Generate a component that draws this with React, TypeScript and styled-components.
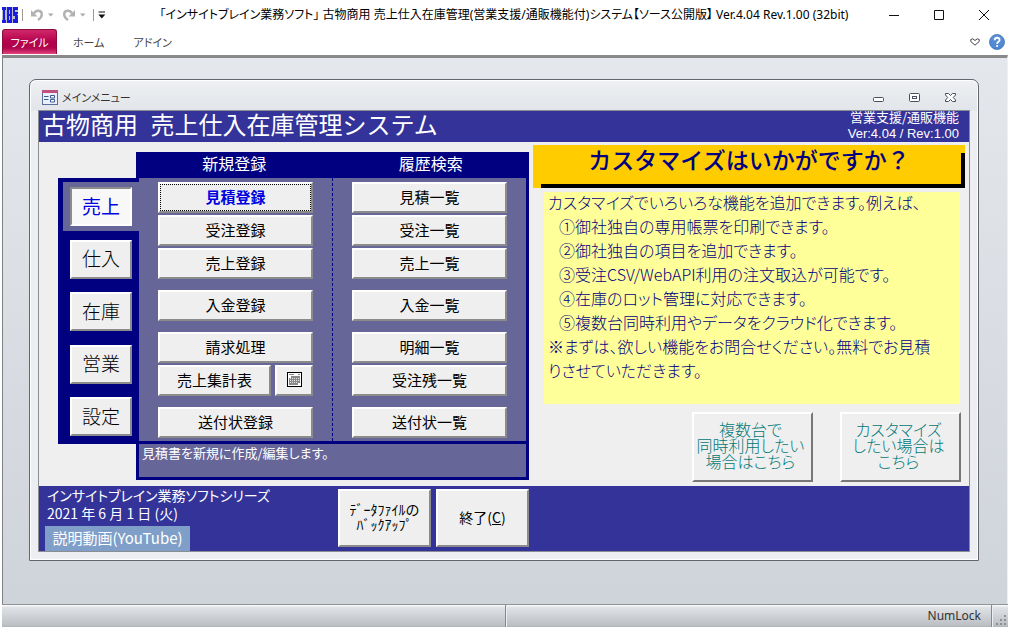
import React from "react";
import styled, { createGlobalStyle, css } from "styled-components";

const color = {
  navy: "#000080",
  indigo: "#333399",
  slate: "#666699",
  face: "#efefef",
  teal: "#007878",
};

const GlobalStyle = createGlobalStyle`
  *, *::before, *::after { box-sizing: border-box; }
  body {
    margin: 0;
    background: #fff;
    color: #000;
    font-family: "Noto Sans CJK JP", sans-serif;
    font-weight: 300;
  }
  button {
    margin: 0;
    padding: 0;
    border: 0;
    background: none;
    color: inherit;
    font: inherit;
    font-feature-settings: inherit;
  }
  h1, h2, p { margin: 0; font-weight: inherit; }
  svg { display: block; }
`;

const Shell = styled.div`
  display: flex;
  flex-direction: column;
  min-height: 100vh;
  padding: 0 1px 1px 2px;
`;

/* ---------- application frame ---------- */

const TitleBar = styled.header`
  display: grid;
  grid-template-columns: 1fr auto 1fr;
  align-items: center;
  height: 29px;
  padding-right: 2px;
`;

const QuickAccess = styled.div`
  display: flex;
  gap: 2px;
  align-items: center;
  height: 29px;
`;

const QuickButton = styled.button<{ $inset?: boolean }>`
  display: flex;
  align-items: center;
  height: 20px;
  padding-left: ${(p) => (p.$inset ? "3px" : "0")};
`;

const AppTitle = styled.h1`
  font-family: "Noto Sans", "Noto Sans CJK JP", sans-serif;
  font-size: 12px;
  font-weight: 400;
  line-height: 16px;
  font-feature-settings: "palt";
  white-space: nowrap;
`;

const Controls = styled.div`
  display: flex;
  justify-content: flex-end;
`;

const ControlButton = styled.button`
  display: flex;
  align-items: center;
  justify-content: center;
  width: 45px;
  height: 29px;
`;

const Ribbon = styled.nav`
  display: flex;
  align-items: stretch;
  height: 25px;
  padding-right: 3px;
`;

const RibbonTab = styled.button<{ $primary?: boolean }>`
  padding: 0 13px 0 16px;
  color: #444;
  font-size: 11px;
  font-weight: 400;
  line-height: 24px;
  font-feature-settings: "palt";
  white-space: nowrap;
  ${(p) =>
    p.$primary &&
    css`
      width: 55px;
      padding: 0;
      border: 1px solid #8d0c3e;
      border-bottom: 0;
      border-radius: 3px 3px 0 0;
      background: linear-gradient(#d0286a, #b3004c 50%, #b0044c 75%, #e2447c);
      color: #fff;
    `}
`;

const RibbonTools = styled.div`
  display: flex;
  align-items: center;
  gap: 9px;
  margin-left: auto;
`;

const ControlIcon = styled.button`
  display: flex;
  align-items: center;
`;

const Workspace = styled.main`
  flex: 1;
  margin-top: 1px;
  padding: 21px 28px 43px 26px;
  border-top: 3px solid #8a8a8a;
  border-left: 1px solid #7d8084;
  border-right: 1px solid #eef0f2;
  background: linear-gradient(#e4e8ec, #cfd3da);
`;

const StatusBar = styled.footer`
  display: flex;
  align-items: stretch;
  height: 23px;
  border-top: 1px solid #8f949a;
  background: linear-gradient(#fafbfb, #dfe2e5 12%, #bcc0c5 92%, #b0b4b9);
  color: #333;
  font-family: "Noto Sans", sans-serif;
  font-size: 12px;
  font-weight: 400;
  line-height: 20px;
`;

const StatusCell = styled.div`
  flex: 1 1 0;
  padding-top: 1px;
  border-right: 1px solid #85898e;
  box-shadow: 1px 0 0 #eceef0;
  text-align: right;
`;

const StatusText = styled.span`
  margin-right: 10px;
`;

const StatusGroup = styled.div`
  display: flex;
  flex: 1 1 0;
`;

const Grip = styled.div`
  display: flex;
  align-items: flex-end;
  justify-content: flex-end;
  width: 16px;
  padding: 0 1px 1px 0;
`;

/* ---------- form window ---------- */

const FormWindow = styled.section`
  padding: 0 8px 8px;
  border: 1px solid #63676d;
  border-radius: 7px 7px 0 0;
  background: linear-gradient(#eef0f3, #e2e5e9 30px, #eceef1 31px);
  box-shadow: inset 0 0 0 1px #fff;
`;

const FormTitle = styled.div`
  display: flex;
  align-items: center;
  height: 30px;
  padding: 4px 1px 0 4px;
  color: #333;
  font-size: 11px;
  font-weight: 400;
  line-height: 16px;
  font-feature-settings: "palt";
`;

const FormIcon = styled.span`
  margin-right: 4px;
`;

const FormControls = styled.div`
  display: flex;
  margin-left: auto;
`;

const FormControl = styled.button`
  display: flex;
  align-items: center;
  justify-content: center;
  width: 36px;
  height: 20px;
`;

const FormFrame = styled.div`
  border: 1px solid #8a8d92;
  background: ${color.face};
`;

const FormHeader = styled.div`
  display: flex;
  justify-content: space-between;
  height: 31px;
  padding: 0 10px 0 3px;
  background: ${color.indigo};
  color: #fff;
`;

const SystemName = styled.h2`
  font-size: 24px;
  font-weight: 400;
  line-height: 26px;
  white-space: nowrap;
`;

const SystemNamePart = styled.span`
  margin-left: 7px;
`;

const Edition = styled.div`
  margin-top: -2px;
  font-size: 13px;
  font-weight: 400;
  line-height: 16px;
  text-align: right;
  white-space: nowrap;
`;

const EditionVersion = styled.div`
  padding-top: 1px;
  font-family: "Liberation Sans", sans-serif;
`;

const FormBody = styled.div`
  display: flex;
  gap: 4px;
  padding: 3px 4px 4px 19px;
`;

/* ---------- menu ---------- */

const raised = css`
  padding-bottom: 2px;
  border: 2px solid;
  border-color: #fff #8b8b8b #8b8b8b #fff;
  background: ${color.face};
`;

const Menu = styled.div`
  display: grid;
  flex: none;
  grid-template-columns: 78px 393px;
  grid-template-rows: 26px 266px 36px;
  padding-top: 7px;
`;

const MenuHead = styled.div`
  display: grid;
  grid-column: 2;
  grid-template-columns: 1fr 1fr;
  background: ${color.navy};
  color: #fff;
  font-size: 16px;
  font-weight: 400;
  line-height: 22px;
  text-align: center;
`;

const SideTabs = styled.div`
  display: flex;
  flex-direction: column;
  grid-column: 1;
  justify-content: space-between;
  padding: 4px 0 3px 5px;
  background: ${color.navy};
`;

const SideSlot = styled.div<{ $active?: boolean }>`
  padding: 5px 4px 5px 7px;
  ${(p) =>
    p.$active &&
    css`
      position: relative;
      z-index: 1;
      margin-right: -3px;
      background: ${color.slate};
    `}
`;

const SideButton = styled.button<{ $active?: boolean }>`
  display: block;
  width: 62px;
  height: 39px;
  font-size: 19px;
  line-height: 32px;
  ${raised}
  ${(p) =>
    p.$active &&
    css`
      border-color: #8b8b8b #fff #fff #8b8b8b;
      background: #f8f8f8;
      color: #0000e0;
      font-weight: 400;
    `}
`;

const MenuPanel = styled.div`
  display: grid;
  grid-column: 2;
  grid-template-columns: 193px 1fr;
  border: 3px solid ${color.navy};
  border-top: 0;
  background: ${color.slate};
`;

const ActionColumn = styled.div`
  display: flex;
  flex-direction: column;
  gap: 11px;
  padding: 4px 19px 0;

  & + & {
    border-left: 1px dashed ${color.navy};
  }
`;

const ActionGroup = styled.div`
  display: flex;
  flex-direction: column;
  gap: 2px;
`;

const ActionRow = styled.div`
  display: flex;
  gap: 4px;
`;

const ActionButton = styled.button<{ $current?: boolean; $narrow?: boolean }>`
  display: flex;
  flex: ${(p) => (p.$narrow ? "0 0 38px" : "1 1 auto")};
  align-items: center;
  justify-content: center;
  height: 31px;
  font-size: 15px;
  font-weight: 400;
  line-height: 22px;
  ${raised}
  ${(p) =>
    p.$current &&
    css`
      outline: 1px dotted #000;
      outline-offset: -3px;
      color: #0000e0;
      font-weight: 700;
    `}
`;

const Description = styled.p`
  grid-column: 2;
  padding: 0 3px;
  border: 3px solid ${color.navy};
  border-top: 0;
  background: ${color.slate};
  color: #fff;
  font-size: 13px;
  font-weight: 400;
  line-height: 18px;
  font-feature-settings: "palt";
`;

/* ---------- promotion column ---------- */

const Promo = styled.aside`
  display: flex;
  flex: 1;
  flex-direction: column;
  min-width: 0;
`;

const PromoBanner = styled.h2`
  height: 43px;
  background:
    linear-gradient(#000, #000) right bottom / 4px calc(100% - 8px) no-repeat,
    linear-gradient(#000, #000) right bottom / calc(100% - 8px) 4px no-repeat,
    #ffcc00;
  color: ${color.navy};
  font-size: 23px;
  font-weight: 500;
  line-height: 28px;
  text-align: center;
`;

const PromoText = styled.div`
  display: flow-root;
  height: 212px;
  margin: 4px 5px 0 11px;
  padding: 0 4px;
  background: #ffff99;
  color: ${color.navy};
  font-size: 16px;
  line-height: 24px;
  font-feature-settings: "palt";
`;

const PromoLine = styled.p<{ $indent?: boolean }>`
  padding-left: ${(p) => (p.$indent ? "11px" : "0")};

  &:first-child {
    margin-top: -2px;
  }
`;

const PromoActions = styled.div`
  display: flex;
  gap: 27px;
  justify-content: flex-end;
  padding: 8px 4px 0 0;
`;

const PromoButton = styled.button`
  width: 121px;
  height: 70px;
  padding: 0 4px 4px 0;
  border: 2px solid;
  border-color: #fff #777 #777 #fff;
  background: ${color.face};
  color: ${color.teal};
  font-size: 16px;
  line-height: 16px;
  font-feature-settings: "palt";
  white-space: nowrap;
`;

/* ---------- form footer ---------- */

const FormFooter = styled.div`
  display: flex;
  height: 65px;
  padding: 0 6px;
  background: ${color.indigo};
  color: #fff;
`;

const FooterInfo = styled.div`
  width: 293px;
  font-size: 14px;
  font-weight: 400;
  line-height: 18px;
  font-feature-settings: "palt";
`;

const FooterLine = styled.p`
  padding-left: 2px;
`;

const VideoLink = styled.a`
  display: inline-block;
  width: 145px;
  height: 25px;
  margin-top: 4px;
  background: #809fc8;
  color: #fff;
  font-size: 15px;
  line-height: 23px;
  text-align: center;
  text-decoration: none;
  white-space: nowrap;
`;

const FooterActions = styled.div`
  display: flex;
  gap: 5px;
  padding-top: 3px;
`;

const FooterButton = styled.button`
  width: 93px;
  height: 58px;
  color: #000;
  font-size: 14px;
  font-weight: 400;
  line-height: 15px;
  ${raised}
`;

/* ---------- icons ---------- */

const Logo = () => (
  <svg width="16" height="16" viewBox="0 0 16 16" role="img" aria-label="IBS" shapeRendering="crispEdges">
    <rect width="16" height="16" fill="#1a1ae0" />
    <g fill="#b9bccb">
      <rect x="0" y="3" width="1" height="10" />
      <rect x="3" y="3" width="2" height="10" />
      <rect x="4" y="0" width="1" height="16" />
      <rect x="7" y="3" width="1" height="4" />
      <rect x="7" y="9" width="1" height="4" />
      <rect x="10" y="0" width="1" height="16" />
      <rect x="13" y="3" width="3" height="2" />
      <rect x="11" y="9" width="2" height="3" />
      <rect x="15" y="7" width="1" height="1" />
    </g>
  </svg>
);

const Bar = () => (
  <svg width="5" height="14" viewBox="0 0 5 14">
    <path d="M2.500 1v12" stroke="#9a9a9a" />
  </svg>
);

const Undo = ({ redo }: { redo?: boolean }) => (
  <svg width="14" height="14" viewBox="0 0 14 14">
    <g transform={redo ? "translate(14 0) scale(-1 1)" : undefined} fill="none">
      <path d="M4 5.500C6 1.500 12 2 11.800 6.500c0 2.500-1.500 4-3.800 5.500" stroke="#b2b2b2" strokeWidth="2.400" />
      <path d="M1 2v6.500h6.500z" fill="#b2b2b2" />
    </g>
  </svg>
);

const Caret = () => (
  <svg width="13" height="6" viewBox="0 0 13 6">
    <path d="M4 1.500h5.500L6.800 4.500z" fill="#aaa" />
  </svg>
);

const Customize = () => (
  <svg width="8" height="8" viewBox="0 0 8 8">
    <path d="M.5 1h6.500" stroke="#111" />
    <path d="M.3 3.500h7L3.800 7.500z" fill="#111" />
  </svg>
);

const HelpIcon = () => (
  <svg width="16" height="16" viewBox="0 0 16 16">
    <defs>
      <linearGradient id="help" x1="0" y1="0" x2="0" y2="1">
        <stop offset="0" stopColor="#5f90d4" />
        <stop offset="1" stopColor="#4a86d4" />
      </linearGradient>
    </defs>
    <circle cx="8" cy="8" r="7.500" fill="url(#help)" stroke="#3f70b5" strokeWidth=".8" />
    <path d="M5.600 6.200c0-3.200 5-3.200 5-.3 0 1.900-2.500 1.900-2.500 4" fill="none" stroke="#fff" strokeWidth="1.800" />
    <circle cx="8.100" cy="12" r="1.100" fill="#fff" />
  </svg>
);

const FormGlyph = () => (
  <svg width="16" height="15" viewBox="0 0 16 15">
    <rect x=".5" y=".5" width="15" height="14" fill="#eaf0fa" stroke="#5a6e98" />
    <path fill="#c0507e" d="M0 0h16v3H0z" />
    <path d="M2 6.500h4.500M2 9.500h4.500" stroke="#3c5a94" />
    <path d="M8.500 5.500h4v2.500h-4zM8.500 9.500h4V12h-4z" fill="#fff" stroke="#3c5a94" />
  </svg>
);

const Calendar = () => (
  <svg width="15" height="15" viewBox="0 0 15 15" shapeRendering="crispEdges">
    <path fill="#000" d="M0 0h15v15H0z" />
    <path fill="#fff" d="M1 1h13v13H1z" />
    <path fill="#8a8a8a" d="M2 2h5v1H2zM11 2h2v1h-2zM4 4h9v7h-2v2H2V6h2z" />
    <path fill="#e4e4e4" d="M3 6h1v1H3zM5 6h1v1H5zM7 6h1v1H7zM9 6h1v1H9zM11 6h1v1h-1zM3 8h1v1H3zM5 8h1v1H5zM7 8h1v1H7zM9 8h1v1H9zM11 8h1v1h-1zM3 10h1v1H3zM5 10h1v1H5zM7 10h1v1H7zM9 10h1v1H9z" />
  </svg>
);

type Entry = { label: string; current?: boolean; calendar?: boolean };

const registerGroups: Entry[][] = [
  [{ label: "見積登録", current: true }, { label: "受注登録" }, { label: "売上登録" }],
  [{ label: "入金登録" }],
  [{ label: "請求処理" }, { label: "売上集計表", calendar: true }],
  [{ label: "送付状登録" }],
];

const historyGroups: Entry[][] = [
  [{ label: "見積一覧" }, { label: "受注一覧" }, { label: "売上一覧" }],
  [{ label: "入金一覧" }],
  [{ label: "明細一覧" }, { label: "受注残一覧" }],
  [{ label: "送付状一覧" }],
];

const Actions = ({ groups }: { groups: Entry[][] }) => (
  <ActionColumn>
    {groups.map((group) => (
      <ActionGroup key={group[0].label}>
        {group.map((entry) => (
          <ActionRow key={entry.label}>
            <ActionButton $current={entry.current}>{entry.label}</ActionButton>
            {entry.calendar && (
              <ActionButton $narrow aria-label="カレンダー">
                <Calendar />
              </ActionButton>
            )}
          </ActionRow>
        ))}
      </ActionGroup>
    ))}
  </ActionColumn>
);

const features = [
  "①御社独自の専用帳票を印刷できます。",
  "②御社独自の項目を追加できます。",
  "③受注CSV/WebAPI利用の注文取込が可能です。",
  "④在庫のロット管理に対応できます。",
  "⑤複数台同時利用やデータをクラウド化できます。",
];

export default function App() {
  return (
    <Shell>
      <GlobalStyle />
      <TitleBar>
        <QuickAccess>
          <Logo />
          <Bar />
          <QuickButton $inset aria-label="元に戻す"><Undo /><Caret /></QuickButton>
          <QuickButton $inset aria-label="やり直し"><Undo redo /><Caret /></QuickButton>
          <Bar />
          <QuickButton aria-label="クイック アクセス"><Customize /></QuickButton>
        </QuickAccess>
        <AppTitle>
          「インサイトブレイン業務ソフト」 古物商用 売上仕入在庫管理(営業支援/通販機能付)システム【ソース公開版】 Ver.4.04 Rev.1.00 (32bit)
        </AppTitle>
        <Controls>
          <ControlButton aria-label="最小化">
            <svg width="10" height="10" viewBox="0 0 10 10"><path d="M0 5.500h10" stroke="#111" /></svg>
          </ControlButton>
          <ControlButton aria-label="最大化">
            <svg width="10" height="10" viewBox="0 0 10 10"><path d="M.5.5h9v9h-9z" stroke="#111" fill="none" /></svg>
          </ControlButton>
          <ControlButton aria-label="閉じる">
            <svg width="10" height="10" viewBox="0 0 10 10"><path d="M0 0l10 10M10 0L0 10" stroke="#111" /></svg>
          </ControlButton>
        </Controls>
      </TitleBar>
      <Ribbon>
        <RibbonTab $primary>ファイル</RibbonTab>
        <RibbonTab>ホーム</RibbonTab>
        <RibbonTab>アドイン</RibbonTab>
        <RibbonTools>
          <ControlIcon aria-label="リボンの展開">
            <svg width="10" height="8" viewBox="0 0 10 8">
              <path d="M.8 1.500L2.800.8 5 2.500 7.200.8l2 .7v2L5 7.200.8 3.500z" fill="#fff" stroke="#444" />
            </svg>
          </ControlIcon>
          <ControlIcon aria-label="ヘルプ"><HelpIcon /></ControlIcon>
        </RibbonTools>
      </Ribbon>

      <Workspace>
        <FormWindow>
          <FormTitle>
            <FormIcon><FormGlyph /></FormIcon>
            メインメニュー
            <FormControls>
              <FormControl aria-label="最小化">
                <svg width="12" height="12" viewBox="0 0 12 12"><rect x=".5" y="6.500" width="10" height="4" rx="1" fill="#fff" stroke="#4a4f60" /></svg>
              </FormControl>
              <FormControl aria-label="元のサイズに戻す">
                <svg width="12" height="12" viewBox="0 0 12 12">
                  <rect x=".5" y="2.500" width="10" height="8" rx="1" fill="#fff" stroke="#4a4f60" />
                  <rect x="3.500" y="5.500" width="4" height="2" fill="none" stroke="#4a4f60" />
                </svg>
              </FormControl>
              <FormControl aria-label="閉じる">
                <svg width="12" height="12" viewBox="0 0 12 12">
                  <path d="M.5 2.500h3L5.500 4.500l2-2h3v1.500L8.300 6.500l2.200 2.500v1.500h-3l-2-2-2 2h-3V9l2.200-2.500L.5 4z" fill="#fff" stroke="#4a4f60" />
                </svg>
              </FormControl>
            </FormControls>
          </FormTitle>

          <FormFrame>
            <FormHeader>
              <SystemName>
                古物商用 <SystemNamePart>売上仕入在庫管理システム</SystemNamePart>
              </SystemName>
              <Edition>
                営業支援/通販機能
                <EditionVersion>Ver:4.04 / Rev:1.00</EditionVersion>
              </Edition>
            </FormHeader>

            <FormBody>
              <Menu>
                <MenuHead>
                  <span>新規登録</span>
                  <span>履歴検索</span>
                </MenuHead>
                <SideTabs>
                  {["売上", "仕入", "在庫", "営業", "設定"].map((label, i) => (
                    <SideSlot key={label} $active={i === 0}>
                      <SideButton $active={i === 0}>{label}</SideButton>
                    </SideSlot>
                  ))}
                </SideTabs>
                <MenuPanel>
                  <Actions groups={registerGroups} />
                  <Actions groups={historyGroups} />
                </MenuPanel>
                <Description>見積書を新規に作成/編集します。</Description>
              </Menu>

              <Promo>
                <PromoBanner>カスタマイズはいかがですか？</PromoBanner>
                <PromoText>
                  <PromoLine>カスタマイズでいろいろな機能を追加できます。例えば、</PromoLine>
                  {features.map((text) => (
                    <PromoLine key={text} $indent>{text}</PromoLine>
                  ))}
                  <PromoLine>
                    ※まずは、欲しい機能をお問合せください。無料でお見積
                    <br />
                    りさせていただきます。
                  </PromoLine>
                </PromoText>
                <PromoActions>
                  <PromoButton>複数台で<br />同時利用したい<br />場合はこちら</PromoButton>
                  <PromoButton>カスタマイズ<br />したい場合は<br />こちら</PromoButton>
                </PromoActions>
              </Promo>
            </FormBody>

            <FormFooter>
              <FooterInfo>
                <FooterLine>インサイトブレイン業務ソフトシリーズ</FooterLine>
                <FooterLine>2021 年 6 月 1 日 (火)</FooterLine>
                <VideoLink href="#video">説明動画(YouTube)</VideoLink>
              </FooterInfo>
              <FooterActions>
                <FooterButton>ﾃﾞｰﾀﾌｧｲﾙの<br />ﾊﾞｯｸｱｯﾌﾟ</FooterButton>
                <FooterButton>終了(<u>C</u>)</FooterButton>
              </FooterActions>
            </FormFooter>
          </FormFrame>
        </FormWindow>
      </Workspace>

      <StatusBar>
        <StatusCell />
        <StatusGroup>
          <StatusCell><StatusText>NumLock</StatusText></StatusCell>
          <Grip>
            <svg width="11" height="11" viewBox="0 0 11 11">
              <path fill="#8b9096" d="M8 0h2v2H8zM4 4h2v2H4zM8 4h2v2H8zM0 8h2v2H0zM4 8h2v2H4zM8 8h2v2H8z" />
            </svg>
          </Grip>
        </StatusGroup>
      </StatusBar>
    </Shell>
  );
}
